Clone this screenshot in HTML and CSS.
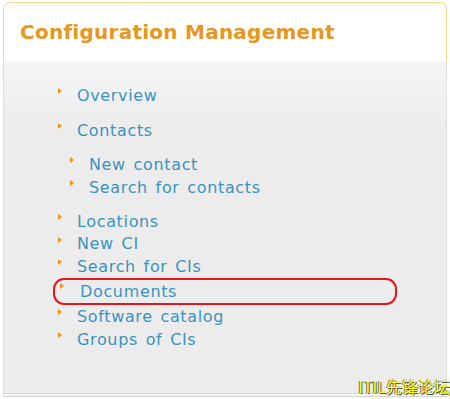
FILE: index.html
```html
<!DOCTYPE html>
<html lang="en">
<head>
    <meta charset="UTF-8">
    <title>Configuration Management</title>
    <link rel="stylesheet" href="styles.css">
</head>
<body>
    <div class="panel">
        <div class="panel-head">
            <h1>Configuration Management</h1>
        </div>
        <div class="panel-body">
            <ul class="menu">
                <li class="gap"><a href="#">Overview</a></li>
                <li class="gap"><a href="#">Contacts</a>
                    <ul class="submenu">
                        <li><a href="#">New contact</a></li>
                        <li><a href="#">Search for contacts</a></li>
                    </ul>
                </li>
                <li><a href="#">Locations</a></li>
                <li class="tight"><a href="#">New CI</a></li>
                <li><a href="#">Search for CIs</a></li>
                <li class="marked"><a href="#">Documents</a></li>
                <li><a href="#">Software catalog</a></li>
                <li><a href="#">Groups of CIs</a></li>
            </ul>
        </div>
    </div>
    <div class="watermark">ITIL先锋论坛</div>
</body>
</html>
```

FILE: styles.css
```css
* {
    margin: 0;
    padding: 0;
    box-sizing: border-box;
}

body {
    font-family: 'DejaVu Sans', Verdana, sans-serif;
    background: #fff;
    width: 450px;
    height: 399px;
    overflow: hidden;
    padding: 2px 3px 0 3px;
}

.panel {
    height: 395px;
    display: flex;
    flex-direction: column;
}

.panel-head {
    background: #fff;
    height: 60px;
    border: 1px solid #f3d98a;
    border-bottom: none;
    border-radius: 7px 7px 0 0;
    padding: 17px 0 0 16px;
}

h1 {
    font-size: 20px;
    font-weight: bold;
    color: #e8961e;
    letter-spacing: 0.25px;
}

.panel-body {
    flex: 1;
    background: linear-gradient(#f5f5f5, #ececec 70px, #ececec);
    border-left: 1px solid #dedede;
    border-right: 1px solid #dedede;
    border-bottom: 4px double #d4d4d4;
    padding: 22px 0 0 53px;
}

.menu {
    list-style: none;
}

.menu li {
    font-size: 16px;
    line-height: 23px;
    letter-spacing: 0.65px;
    word-spacing: 2px;
    padding-left: 20px;
    position: relative;
}

.menu li::before {
    content: "";
    position: absolute;
    left: 1px;
    top: 4px;
    border-left: 4px solid #e8961e;
    border-top: 3px solid transparent;
    border-bottom: 3px solid transparent;
}

.menu li.gap {
    margin-bottom: 11px;
}

.menu li.gap:first-child {
    margin-bottom: 12px;
}

.menu li.tight {
    line-height: 22px;
}

.submenu {
    list-style: none;
    margin: 11px 0 0 -8px;
}

.menu .submenu li {
    padding-left: 20px;
}

.menu a {
    color: #3b93bf;
    text-decoration: none;
}

.menu li.marked {
    border: 2px solid #e8141c;
    border-radius: 11px;
    width: 344px;
    margin: 0 0 0 -4px;
    padding-left: 25px;
    line-height: 23px;
}

.menu li.marked::before {
    left: 5px;
    top: 3px;
}

.watermark {
    position: absolute;
    right: 0;
    bottom: 4px;
    font-family: 'Noto Sans CJK SC', sans-serif;
    font-size: 16px;
    line-height: 18px;
    color: #ffff00;
    text-shadow: 1px 1px 0 #555, -1px 0 0 #777;
}
```
